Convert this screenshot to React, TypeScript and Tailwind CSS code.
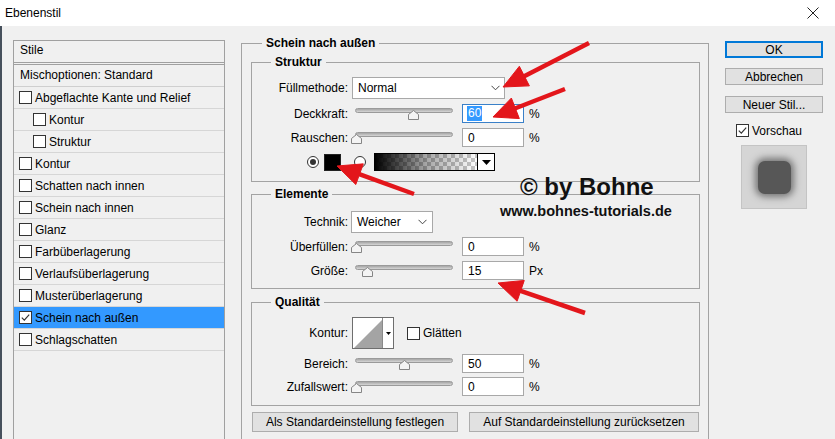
import React from 'react';

const stileRows = [
  { label: 'Abgeflachte Kante und Relief', indent: false },
  { label: 'Kontur', indent: true },
  { label: 'Struktur', indent: true },
  { label: 'Kontur', indent: false },
  { label: 'Schatten nach innen', indent: false },
  { label: 'Schein nach innen', indent: false },
  { label: 'Glanz', indent: false },
  { label: 'Farbüberlagerung', indent: false },
  { label: 'Verlaufsüberlagerung', indent: false },
  { label: 'Musterüberlagerung', indent: false },
  { label: 'Schein nach außen', indent: false, checked: true },
  { label: 'Schlagschatten', indent: false },
];

// red tutorial arrows: tail -> tip
const arrows = [
  [589, 43, 503, 87],
  [565, 89, 493, 117],
  [414, 194, 337, 166],
  [585, 313, 498, 283],
];

function Checkbox({ checked = false }: { checked?: boolean }) {
  return (
    <span className="w-[13px] h-[13px] border border-[#333333] bg-white flex items-center justify-center shrink-0">
      {checked && (
        <svg width="11" height="11" viewBox="0 0 11 11">
          <path d="M1.8 5.6 L4.3 8.1 L9.2 2.6" fill="none" stroke="#333" strokeWidth="1.2" />
        </svg>
      )}
    </span>
  );
}

function Radio({ on = false }: { on?: boolean }) {
  return (
    <span className="w-[12px] h-[12px] rounded-full border border-[#333333] bg-white flex items-center justify-center shrink-0">
      {on && <span className="w-[6px] h-[6px] rounded-full bg-[#333333]" />}
    </span>
  );
}

function Chevron() {
  return (
    <svg width="9" height="6" viewBox="0 0 9 6">
      <path d="M0.5 0.8 L4.5 4.8 L8.5 0.8" fill="none" stroke="#444" strokeWidth="1" />
    </svg>
  );
}

function Slider({ pct }: { pct: number }) {
  return (
    <div className="relative ml-[4px] w-[105px] h-[19px] shrink-0">
      <div className="ml-[3px] mt-[4px] w-[98px] h-[5px] rounded-full border border-[#9a9a9a] bg-linear-to-b from-[#a6a6a6] to-[#d6d6d6]" />
      <svg className="absolute top-[6px]" style={{ left: 4 + pct * 96 - 5.5 }} width="11" height="10" viewBox="0 0 11 10">
        <polygon points="5.5,0.5 10.5,4.5 10.5,9.5 0.5,9.5 0.5,4.5" fill="#f4f4f4" stroke="#858585" strokeWidth="1" />
      </svg>
    </div>
  );
}

function NumBox({ value, selected = false }: { value: string; selected?: boolean }) {
  return (
    <div
      className={`ml-[5px] w-[62px] h-[19px] bg-white border flex items-center pl-[4px] shrink-0 ${
        selected ? 'border-[#3a80c8]' : 'border-[#a8a8a8]'
      }`}
    >
      {selected ? <span className="bg-[#3399ff] text-white px-[1px] leading-[15px]">{value}</span> : <span className="pl-[1px]">{value}</span>}
    </div>
  );
}

function SliderRow({ label, pct, value, unit, selected = false, className = '' }: { label: string; pct: number; value: string; unit: string; selected?: boolean; className?: string }) {
  return (
    <div className={`flex items-center h-[19px] ${className}`}>
      <span className="w-[96px] text-right shrink-0">{label}</span>
      <Slider pct={pct} />
      <NumBox value={value} selected={selected} />
      <span className="ml-[5px]">{unit}</span>
    </div>
  );
}

function Group({ title, className = '', children }: { title: string; className?: string; children: React.ReactNode }) {
  return (
    <fieldset className={`border border-[#a3a3a3] ${className}`}>
      <legend className="ml-[19px] px-[4px] font-bold leading-[14px]">{title}</legend>
      {children}
    </fieldset>
  );
}

function arrowGeom(x1: number, y1: number, x2: number, y2: number) {
  const dx = x2 - x1;
  const dy = y2 - y1;
  const len = Math.hypot(dx, dy);
  const ux = dx / len;
  const uy = dy / len;
  const head = 24;
  const half = 11;
  const bx = x2 - ux * head;
  const by = y2 - uy * head;
  const pts = `${x2},${y2} ${bx - uy * half},${by + ux * half} ${bx + uy * half},${by - ux * half}`;
  return { bx: x2 - ux * (head - 4), by: y2 - uy * (head - 4), pts };
}

export default function App() {
  return (
    <div className="relative w-[835px] h-[439px] overflow-hidden bg-[#f0f0f0] text-[12px] text-black font-['Liberation_Sans',Arial,sans-serif]">
      {/* title bar */}
      <div className="h-[26px] bg-white flex items-center justify-between pl-[5px] pr-[16px]">
        <span>Ebenenstil</span>
        <svg width="12" height="12" viewBox="0 0 12 12">
          <path d="M0.5 0.5 L11.5 11.5 M11.5 0.5 L0.5 11.5" stroke="#222" strokeWidth="1" />
        </svg>
      </div>

      <div className="flex border-l-[2px] border-[#46505c] pl-[11px]">
        {/* left: style list */}
        <div className="mt-[14px] w-[212px] h-[420px] border border-[#a0a0a0] shrink-0">
          <div className="h-[24px] flex items-center pl-[6px] pb-[3px] border-b-[3px] border-double border-[#a0a0a0]">Stile</div>
          <div className="h-[22px] flex items-center pl-[6px] pb-[2px] border-b border-[#cfcfcf]">Mischoptionen: Standard</div>
          {stileRows.map((r, i) => (
            <div
              key={i}
              className={`h-[22px] flex items-center border-b border-[#d6d6d6] ${r.indent ? 'pl-[19px]' : 'pl-[5px]'} ${
                r.checked ? 'bg-[#3399ff]' : ''
              }`}
            >
              <Checkbox checked={r.checked} />
              <span className="ml-[3px]">{r.label}</span>
            </div>
          ))}
        </div>

        {/* middle: settings */}
        <fieldset className="ml-[16px] mt-[10px] w-[468px] border border-[#a3a3a3] pl-[9px] pr-[8px] pb-[30px] shrink-0">
          <legend className="ml-[11px] px-[4px] font-bold leading-[14px]">Schein nach außen</legend>

          <Group title="Struktur" className="mt-[5px] pt-[8px] pb-[10px]">
            <div className="flex items-center h-[22px]">
              <span className="w-[96px] text-right shrink-0">Füllmethode:</span>
              <div className="ml-[4px] w-[153px] h-[22px] bg-white border border-[#a8a8a8] flex items-center justify-between pl-[5px] pr-[4px]">
                <span>Normal</span>
                <Chevron />
              </div>
            </div>
            <SliderRow className="mt-[5px]" label="Deckkraft:" pct={0.6} value="60" unit="%" selected />
            <SliderRow className="mt-[5px]" label="Rauschen:" pct={0} value="0" unit="%" />
            <div className="mt-[6px] h-[18px] flex items-center pl-[55px]">
              <Radio on />
              <span className="ml-[5px] w-[17px] h-[17px] bg-black border border-[#222]" />
              <span className="ml-[13px]">
                <Radio />
              </span>
              <div className="ml-[8px] w-[121px] h-[18px] border border-black flex">
                <div className="flex-1 bg-[image:repeating-conic-gradient(#c6c6c6_0%_25%,#ffffff_0%_50%)] bg-[length:8px_8px]">
                  <div className="w-full h-full bg-linear-to-r from-black via-[rgba(0,0,0,0.35)] to-transparent" />
                </div>
                <div className="w-[17px] border-l border-black bg-white flex items-center justify-center">
                  <svg width="9" height="5" viewBox="0 0 9 5">
                    <polygon points="0,0 9,0 4.5,5" fill="#000" />
                  </svg>
                </div>
              </div>
            </div>
          </Group>

          <Group title="Elemente" className="mt-[5px] pt-[10px] pb-[8px]">
            <div className="flex items-center h-[22px]">
              <span className="w-[96px] text-right shrink-0">Technik:</span>
              <div className="ml-[3px] w-[82px] h-[22px] bg-white border border-[#a8a8a8] flex items-center justify-between pl-[5px] pr-[5px]">
                <span>Weicher</span>
                <Chevron />
              </div>
            </div>
            <SliderRow className="mt-[4px]" label="Überfüllen:" pct={0} value="0" unit="%" />
            <SliderRow className="mt-[5px]" label="Größe:" pct={0.115} value="15" unit="Px" />
          </Group>

          <Group title="Qualität" className="mt-[6px] pt-[8px] pb-[9px]">
            <div className="flex items-center h-[32px]">
              <span className="w-[96px] text-right shrink-0">Kontur:</span>
              <div className="ml-[4px] w-[42px] h-[32px] bg-white border border-[#6e6e6e] flex">
                <svg width="29" height="30" viewBox="0 0 29 30">
                  <polygon points="1,30 29,2 29,30" fill="#a4a4a4" />
                </svg>
                <div className="flex-1 border-l border-[#8a8a8a] flex items-center justify-center">
                  <svg width="5" height="3" viewBox="0 0 5 3">
                    <polygon points="0,0 5,0 2.5,3" fill="#000" />
                  </svg>
                </div>
              </div>
              <span className="ml-[13px]">
                <Checkbox />
              </span>
              <span className="ml-[3px]">Glätten</span>
            </div>
            <SliderRow className="mt-[5px]" label="Bereich:" pct={0.5} value="50" unit="%" />
            <SliderRow className="mt-[4px]" label="Zufallswert:" pct={0} value="0" unit="%" />
          </Group>

          <div className="mt-[6px] ml-[1px] flex gap-[11px]">
            <div className="w-[206px] h-[20px] bg-[#e1e1e1] border border-[#adadad] flex items-center justify-center">
              Als Standardeinstellung festlegen
            </div>
            <div className="w-[230px] h-[20px] bg-[#e1e1e1] border border-[#adadad] flex items-center justify-center">
              Auf Standardeinstellung zurücksetzen
            </div>
          </div>
        </fieldset>

        {/* right: buttons + preview */}
        <div className="ml-[16px] mt-[15px] w-[98px] flex flex-col shrink-0">
          <div className="h-[17px] bg-[#e1e1e1] border-2 border-[#0078d7] flex items-center justify-center">OK</div>
          <div className="mt-[10px] h-[17px] bg-[#e1e1e1] border border-[#adadad] flex items-center justify-center">Abbrechen</div>
          <div className="mt-[11px] h-[17px] bg-[#e1e1e1] border border-[#adadad] flex items-center justify-center">Neuer Stil...</div>
          <div className="mt-[11px] ml-[11px] flex items-center h-[13px]">
            <Checkbox checked />
            <span className="ml-[3px]">Vorschau</span>
          </div>
          <div className="mt-[8px] ml-[16px] w-[66px] h-[64px] bg-[#d5d5d5] border border-[#c4c4c4] flex items-center justify-center">
            <div className="w-[33px] h-[33px] rounded-[7px] bg-[#575757] shadow-[0_0_7px_3px_rgba(40,40,40,0.55)]" />
          </div>
        </div>
      </div>

      {/* watermark */}
      <div className="absolute left-[520px] top-[175px] text-[24px] leading-[24px] font-bold text-[#111] font-['Liberation_Sans',Arial,sans-serif]">
        © by Bohne
      </div>
      <div className="absolute left-[500px] top-[204px] text-[14.5px] leading-[15px] font-bold text-[#111]">
        www.bohnes-tutorials.de
      </div>

      {/* arrows */}
      <svg className="absolute inset-0 pointer-events-none" width="835" height="439" viewBox="0 0 835 439">
        {arrows.map(([x1, y1, x2, y2], i) => {
          const g = arrowGeom(x1, y1, x2, y2);
          return (
            <g key={i} fill="#e3161b" stroke="#e3161b">
              <line x1={x1} y1={y1} x2={g.bx} y2={g.by} strokeWidth="4.5" />
              <polygon points={g.pts} strokeWidth="1" strokeLinejoin="round" />
            </g>
          );
        })}
      </svg>
    </div>
  );
}
